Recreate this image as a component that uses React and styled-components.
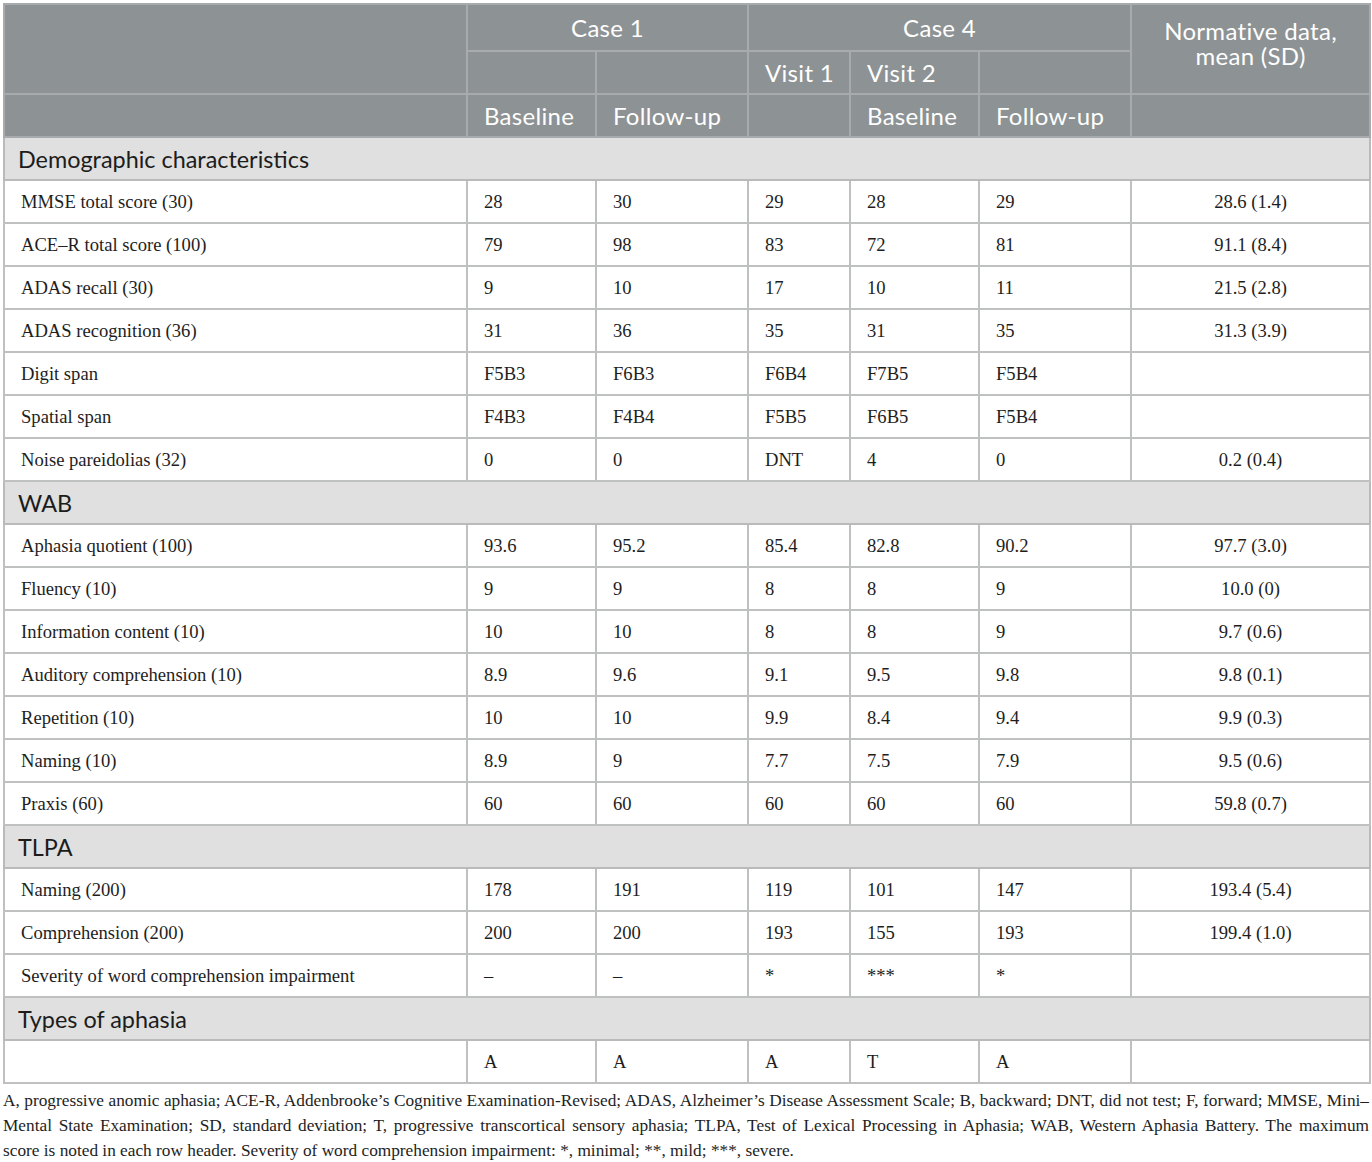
import React from "react";
import styled, { createGlobalStyle } from "styled-components";

const GlobalStyle = createGlobalStyle`
    body {
        margin: 0;
        padding: 3px;
        background: #ffffff;
        font-family: "Liberation Serif", "Times New Roman", serif;
    }
`;

const Wrap = styled.div`
    width: 1366px;
`;

const Table = styled.table`
    width: 1366px;
    table-layout: fixed;
    border-collapse: collapse;
    border: 2px solid #b9bbbb;
`;

const HeadCell = styled.th`
    background: #8d9294;
    color: #ffffff;
    font-family: "Lato", "Open Sans", sans-serif;
    font-weight: 400;
    font-size: 24px;
    letter-spacing: 0.3px;
    line-height: 26px;
    white-space: nowrap;
    height: ${(p) => p.h || 43}px;
    padding: 0 ${(p) => (p.center ? 6 : 16)}px;
    text-align: ${(p) => (p.center ? "center" : "left")};
    vertical-align: ${(p) => (p.top ? "top" : "middle")};
    padding-top: ${(p) => (p.top ? 13 : 0)}px;
    border: 2px solid #a7abad;
    box-sizing: border-box;
`;

const HeadLine = styled.span`
    display: block;
    line-height: 25px;
`;

const SectionCell = styled.td`
    background: #dfe0df;
    color: #1c1c1c;
    font-family: "Lato", "Open Sans", sans-serif;
    font-size: 23.4px;
    height: 43px;
    padding: 0 13px;
    border: 2px solid #b9bbbb;
    box-sizing: border-box;
`;

const Cell = styled.td`
    color: #1e1e1e;
    font-size: 18.6px;
    height: 43px;
    padding: 0 16px;
    text-align: ${(p) => (p.center ? "center" : "left")};
    border: 2px solid #bfc0c0;
    box-sizing: border-box;
    white-space: nowrap;
`;

const Note = styled.p`
    margin: 4px 0 0;
    font-size: 17.3px;
    line-height: 25px;
    color: #1e1e1e;
    text-align: justify;
`;

const sections = [
    {
        title: "Demographic characteristics",
        rows: [
            ["MMSE total score (30)", "28", "30", "29", "28", "29", "28.6 (1.4)"],
            ["ACE\u2013R total score (100)", "79", "98", "83", "72", "81", "91.1 (8.4)"],
            ["ADAS recall (30)", "9", "10", "17", "10", "11", "21.5 (2.8)"],
            ["ADAS recognition (36)", "31", "36", "35", "31", "35", "31.3 (3.9)"],
            ["Digit span", "F5B3", "F6B3", "F6B4", "F7B5", "F5B4", ""],
            ["Spatial span", "F4B3", "F4B4", "F5B5", "F6B5", "F5B4", ""],
            ["Noise pareidolias (32)", "0", "0", "DNT", "4", "0", "0.2 (0.4)"],
        ],
    },
    {
        title: "WAB",
        rows: [
            ["Aphasia quotient (100)", "93.6", "95.2", "85.4", "82.8", "90.2", "97.7 (3.0)"],
            ["Fluency (10)", "9", "9", "8", "8", "9", "10.0 (0)"],
            ["Information content (10)", "10", "10", "8", "8", "9", "9.7 (0.6)"],
            ["Auditory comprehension (10)", "8.9", "9.6", "9.1", "9.5", "9.8", "9.8 (0.1)"],
            ["Repetition (10)", "10", "10", "9.9", "8.4", "9.4", "9.9 (0.3)"],
            ["Naming (10)", "8.9", "9", "7.7", "7.5", "7.9", "9.5 (0.6)"],
            ["Praxis (60)", "60", "60", "60", "60", "60", "59.8 (0.7)"],
        ],
    },
    {
        title: "TLPA",
        rows: [
            ["Naming (200)", "178", "191", "119", "101", "147", "193.4 (5.4)"],
            ["Comprehension (200)", "200", "200", "193", "155", "193", "199.4 (1.0)"],
            ["Severity of word comprehension impairment", "\u2013", "\u2013", "*", "***", "*", ""],
        ],
    },
    {
        title: "Types of aphasia",
        rows: [["", "A", "A", "A", "T", "A", ""]],
    },
];

const widths = [463, 129, 152, 102, 129, 152, 239];

const App = () => {
    return (
        <Wrap>
            <GlobalStyle />
            <Table>
                <colgroup>
                    {widths.map((w, i) => (
                        <col key={i} style={{ width: w }} />
                    ))}
                </colgroup>
                <thead>
                    <tr>
                        <HeadCell rowSpan={2} h={90} />
                        <HeadCell colSpan={2} center h={47}>Case 1</HeadCell>
                        <HeadCell colSpan={3} center h={47}>Case 4</HeadCell>
                        <HeadCell rowSpan={2} center top h={90}>
                            <HeadLine>Normative data,</HeadLine>
                            <HeadLine>mean (SD)</HeadLine>
                        </HeadCell>
                    </tr>
                    <tr>
                        <HeadCell />
                        <HeadCell />
                        <HeadCell>Visit 1</HeadCell>
                        <HeadCell>Visit 2</HeadCell>
                        <HeadCell />
                    </tr>
                    <tr>
                        <HeadCell />
                        <HeadCell>Baseline</HeadCell>
                        <HeadCell>Follow-up</HeadCell>
                        <HeadCell />
                        <HeadCell>Baseline</HeadCell>
                        <HeadCell>Follow-up</HeadCell>
                        <HeadCell />
                    </tr>
                </thead>
                <tbody>
                    {sections.map((s) => (
                        <React.Fragment key={s.title}>
                            <tr>
                                <SectionCell colSpan={7}>{s.title}</SectionCell>
                            </tr>
                            {s.rows.map((r, i) => (
                                <tr key={i}>
                                    {r.map((v, j) => (
                                        <Cell key={j} center={j === 6}>{v}</Cell>
                                    ))}
                                </tr>
                            ))}
                        </React.Fragment>
                    ))}
                </tbody>
            </Table>
            <Note>
                A, progressive anomic aphasia; ACE-R, Addenbrooke&rsquo;s Cognitive Examination-Revised; ADAS, Alzheimer&rsquo;s Disease Assessment Scale; B, backward; DNT, did not test; F, forward; MMSE, Mini&ndash;Mental State Examination; SD, standard deviation; T, progressive transcortical sensory aphasia; TLPA, Test of Lexical Processing in Aphasia; WAB, Western Aphasia Battery. The maximum score&nbsp;is noted in each row header. Severity of word comprehension impairment: *, minimal; **, mild; ***, severe.
            </Note>
        </Wrap>
    );
};

export default App;
